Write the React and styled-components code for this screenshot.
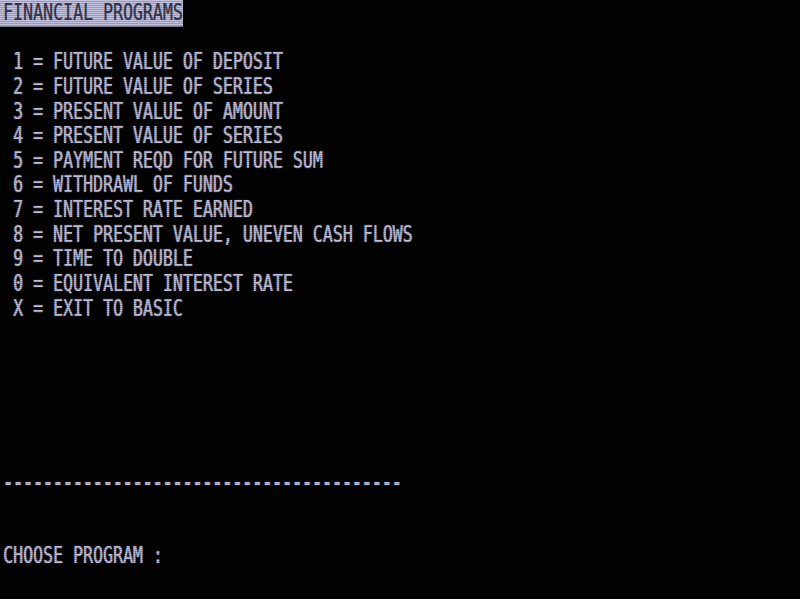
import React from "react";
import styled, { createGlobalStyle } from "styled-components";

const Global = createGlobalStyle`
  html, body {
    margin: 0;
    padding: 0;
    background: #000;
    overflow: hidden;
  }
`;

const Monitor = styled.div`
  position: relative;
  width: 800px;
  height: 599px;
  background: #020203;
  overflow: hidden;

  &::after {
    content: "";
    position: absolute;
    inset: 0;
    pointer-events: none;
    background: repeating-linear-gradient(
      to bottom,
      rgba(0, 0, 0, 0) 0px,
      rgba(0, 0, 0, 0) 1px,
      rgba(0, 0, 0, 0.2) 1px,
      rgba(0, 0, 0, 0.2) 2px
    );
  }
`;

const Screen = styled.div`
  display: flex;
  flex-direction: column;
  padding-left: 3px;
  transform: scaleY(1.4);
  transform-origin: top left;
  font-family: "DejaVu Sans Mono", "Liberation Mono", monospace;
  font-size: 16.6px;
  color: #c0c0dc;
  text-shadow: 0.4px 0 0 rgba(192, 192, 220, 0.7), 0 0 1.5px rgba(192, 192, 220, 0.5);
`;

const Line = styled.div`
  height: 17.64px;
  line-height: 17.64px;
  white-space: pre;
`;

const Divider = styled(Line)`
  font-family: "Liberation Mono", "DejaVu Sans Mono", monospace;
  font-size: 16.63px;
  font-weight: bold;
  transform: translateY(2.2px);
`;

const Inverse = styled.span`
  display: inline-block;
  height: 18.6px;
  margin-left: -3px;
  padding: 0 0 0 3px;
  background: #c2c2de;
  color: #3a3a4e;
  text-shadow: 0.3px 0 0 rgba(58, 58, 78, 0.6);
`;

const lines = [
  null,
  "",
  " 1 = FUTURE VALUE OF DEPOSIT",
  " 2 = FUTURE VALUE OF SERIES",
  " 3 = PRESENT VALUE OF AMOUNT",
  " 4 = PRESENT VALUE OF SERIES",
  " 5 = PAYMENT REQD FOR FUTURE SUM",
  " 6 = WITHDRAWL OF FUNDS",
  " 7 = INTEREST RATE EARNED",
  " 8 = NET PRESENT VALUE, UNEVEN CASH FLOWS",
  " 9 = TIME TO DOUBLE",
  " 0 = EQUIVALENT INTEREST RATE",
  " X = EXIT TO BASIC",
  "",
  "",
  "",
  "",
  "",
  "",
  "divider",
  "",
  "",
  "CHOOSE PROGRAM :",
];

export default function App() {
  return (
    <>
      <Global />
      <Monitor>
        <Screen>
          {lines.map((t, i) => {
            if (t === null) {
              return (
                <Line key={i}>
                  <Inverse>FINANCIAL PROGRAMS</Inverse>
                </Line>
              );
            }
            if (t === "divider") {
              return <Divider key={i}>{"-".repeat(40)}</Divider>;
            }
            return <Line key={i}>{t === "" ? "\u00a0" : t}</Line>;
          })}
        </Screen>
      </Monitor>
    </>
  );
}
